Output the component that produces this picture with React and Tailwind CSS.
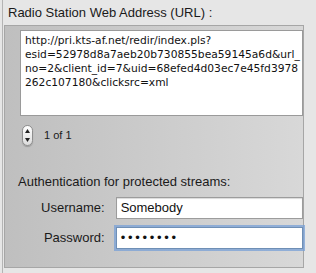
import * as React from "react";

const urlLines = [
  "http://pri.kts-af.net/redir/index.pls?",
  "esid=52978d8a7aeb20b730855bea59145a6d&url_",
  "no=2&client_id=7&uid=68efed4d03ec7e45fd3978",
  "262c107180&clicksrc=xml",
];

function Stepper() {
  return (
    <div className="w-[11px] h-[21px] rounded-full border border-[#8e8e8e] bg-gradient-to-b from-[#ffffff] to-[#dcdcdc] flex flex-col items-center justify-between py-[3px] shadow-[0_1px_1px_rgba(0,0,0,0.2)]">
      <svg width="5" height="4" viewBox="0 0 5 4">
        <path d="M2.5 0 L5 4 L0 4 Z" fill="#222" />
      </svg>
      <svg width="5" height="4" viewBox="0 0 5 4">
        <path d="M0 0 L5 0 L2.5 4 Z" fill="#222" />
      </svg>
    </div>
  );
}

export default function App() {
  return (
    <div className="w-[316px] h-[273px] bg-[#e6e6e6] overflow-hidden font-['Liberation_Sans',Arial,sans-serif] text-black">
      <div className="ml-[2px] h-full border-l border-[#b4b4b4] flex flex-col">
        <div className="h-[25px] pl-[5px] pt-[4px] text-[13px] leading-[17px] text-[#1a1a1a]">
          Radio Station Web Address (URL) :
        </div>
        <div className="ml-[1px] w-[300px] h-[243px] border border-[#a6a6a6] bg-gradient-to-r from-[#bfbfbf] to-[#d8d8d8] flex flex-col">
          <div className="ml-[15px] mt-[4px] w-[283px] h-[86px] bg-white border border-[#9a9a9a] px-[4px] pt-[3px] font-['DejaVu_Sans',sans-serif] text-[10.7px] leading-[14px] text-[#111]">
            {urlLines.map((l) => (
              <div key={l} className="whitespace-pre">{l}</div>
            ))}
          </div>
          <div className="ml-[17px] mt-[9px] flex items-center gap-[11px]">
            <Stepper />
            <span className="text-[11px] text-[#1a1a1a]">1 of 1</span>
          </div>
          <div className="ml-[13px] mt-[27px] text-[13px] leading-[17px] text-[#1a1a1a]">
            Authentication for protected streams:
          </div>
          <div className="mt-[7px] flex flex-col gap-[8px]">
            <div className="flex items-center">
              <span className="w-[100px] text-right text-[13px] text-[#1a1a1a]">Username:</span>
              <div className="ml-[11px] w-[188px] h-[22px] bg-white border border-[#9c9c9c] shadow-[inset_0_1px_1px_rgba(0,0,0,0.15)] pl-[4px] flex items-center text-[13px] text-[#111]">
                Somebody
              </div>
            </div>
            <div className="flex items-center">
              <span className="w-[100px] text-right text-[13px] text-[#1a1a1a]">Password:</span>
              <div className="ml-[11px] w-[188px] h-[22px] bg-white border border-[#6f8fb5] shadow-[0_0_0_2px_rgba(120,160,215,0.75)] pl-[4px] flex items-center text-[13px] tracking-[2.7px] text-[#111]">
                ••••••••
              </div>
            </div>
          </div>
        </div>
      </div>
    </div>
  );
}
